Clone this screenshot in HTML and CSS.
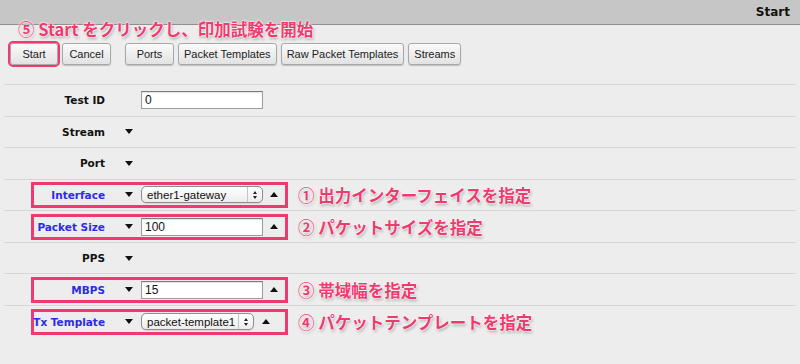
FILE: index.html
```html
<!DOCTYPE html>
<html lang="ja">
<head>
    <meta charset="UTF-8">
    <title>Start</title>
    <link rel="stylesheet" href="styles.css">
</head>
<body>
    <div class="titlebar">
        <span class="title">Start</span>
    </div>

    <div class="toolbar">
        <p class="note note-top">⑤ Start をクリックし、印加試験を開始</p>
        <div class="buttons">
            <button class="btn btn-marked">Start</button>
            <button class="btn">Cancel</button>
            <button class="btn btn-gap">Ports</button>
            <button class="btn">Packet Templates</button>
            <button class="btn">Raw Packet Templates</button>
            <button class="btn">Streams</button>
        </div>
    </div>

    <div class="form">
        <div class="row">
            <div class="field">
                <span class="label">Test ID</span>
                <span class="down blank"></span>
                <input class="text" type="text" value="0">
            </div>
        </div>
        <div class="row">
            <div class="field">
                <span class="label">Stream</span>
                <span class="down"></span>
            </div>
        </div>
        <div class="row">
            <div class="field">
                <span class="label">Port</span>
                <span class="down"></span>
            </div>
        </div>
        <div class="row">
            <div class="field marked">
                <span class="label blue">Interface</span>
                <span class="down"></span>
                <div class="select">
                    <span class="select-value">ether1-gateway</span>
                    <span class="select-arrows"><i class="a-up"></i><i class="a-down"></i></span>
                </div>
                <span class="up"></span>
            </div>
            <p class="note">① 出力インターフェイスを指定</p>
        </div>
        <div class="row">
            <div class="field marked">
                <span class="label blue">Packet Size</span>
                <span class="down"></span>
                <input class="text" type="text" value="100">
                <span class="up"></span>
            </div>
            <p class="note">② パケットサイズを指定</p>
        </div>
        <div class="row">
            <div class="field">
                <span class="label">PPS</span>
                <span class="down"></span>
            </div>
        </div>
        <div class="row">
            <div class="field marked">
                <span class="label blue">MBPS</span>
                <span class="down"></span>
                <input class="text" type="text" value="15">
                <span class="up"></span>
            </div>
            <p class="note">③ 帯域幅を指定</p>
        </div>
        <div class="row">
            <div class="field marked">
                <span class="label blue">Tx Template</span>
                <span class="down"></span>
                <div class="select select-short">
                    <span class="select-value">packet-template1</span>
                    <span class="select-arrows"><i class="a-up"></i><i class="a-down"></i></span>
                </div>
                <span class="up"></span>
            </div>
            <p class="note">④ パケットテンプレートを指定</p>
        </div>
    </div>
</body>
</html>
```

FILE: styles.css
```css
* {
    box-sizing: border-box;
    margin: 0;
    padding: 0;
}

body {
    font-family: "DejaVu Sans", Verdana, sans-serif;
    background-color: #ededed;
    color: #111;
    overflow: hidden;
}

.titlebar {
    height: 25px;
    background-color: #c6c6c6;
    border-bottom: 1px solid #8f8f8f;
    display: flex;
    justify-content: flex-end;
    align-items: center;
    padding-right: 10px;
}

.title {
    font-size: 12px;
    font-weight: bold;
    color: #111;
}

/* annotation callouts */
.note {
    font-family: "Noto Sans CJK JP", "Liberation Sans", sans-serif;
    font-size: 16.5px;
    font-weight: bold;
    line-height: 18px;
    color: #ee3a6e;
    white-space: nowrap;
    text-shadow: 0 0 2px #fff, 0 0 2px #fff, 0 0 1px #fff, 1px 2px 3px rgba(0, 0, 0, 0.3);
    margin-left: 10px;
}

.toolbar {
    padding-left: 10px;
}

.note-top {
    margin: -5px 0 0 8px;
}

.buttons {
    display: flex;
    gap: 4px;
    margin-top: 5px;
}

.btn {
    height: 22px;
    min-width: 49px;
    padding: 0 5px;
    font-family: "Liberation Sans", Arial, sans-serif;
    font-size: 11px;
    color: #222;
    background: linear-gradient(#fafafa, #e2e2e2);
    border: 1px solid #a8a8a8;
    border-radius: 3px;
    box-shadow: 0 1px 1px rgba(0, 0, 0, 0.2);
}

.btn-marked {
    min-width: 48px;
    outline: 2px solid #ee3a6e;
}

.btn-gap {
    margin-left: 10px;
}

/* form rows */
.form {
    margin: 19px 4px 0;
    border-top: 1px solid #d6d6d6;
}

.row {
    height: 31.57px;
    display: flex;
    align-items: center;
    border-bottom: 1px solid #d6d6d6;
}

.row:last-child {
    border-bottom: none;
}

.field {
    width: 257px;
    height: 26px;
    margin-left: 27px;
    border: 3px solid transparent;
    display: flex;
    align-items: center;
}

.field.marked {
    border-color: #ee3a6e;
}

.label {
    width: 71px;
    flex-shrink: 0;
    display: flex;
    justify-content: flex-end;
    white-space: nowrap;
    font-size: 10.5px;
    font-weight: bold;
    color: #111;
}

.label.blue {
    color: #2b2bea;
}

.down,
.up {
    width: 0;
    height: 0;
    flex-shrink: 0;
    border-left: 4px solid transparent;
    border-right: 4px solid transparent;
}

.down {
    margin-left: 20px;
    border-top: 5px solid #111;
}

.down.blank {
    border-top-color: transparent;
}

.up {
    margin-left: 7px;
    border-bottom: 5px solid #111;
}

.text {
    width: 122px;
    height: 18px;
    margin-left: 8px;
    padding: 0 3px;
    font-family: "Liberation Sans", Arial, sans-serif;
    font-size: 12px;
    color: #111;
    background-color: #fff;
    border: 1px solid #9c9c9c;
    border-top-color: #7d7d7d;
    box-shadow: inset 0 1px 1px rgba(0, 0, 0, 0.12);
    outline: none;
}

.select {
    width: 122px;
    height: 17px;
    margin-left: 8px;
    flex-shrink: 0;
    display: flex;
    align-items: center;
    background: linear-gradient(#ffffff, #ececec);
    border: 1px solid #8e8e8e;
    border-radius: 5px;
    box-shadow: 0 1px 1px rgba(0, 0, 0, 0.1);
    font-family: "Liberation Sans", Arial, sans-serif;
    font-size: 11.5px;
    color: #111;
}

.select-short {
    width: 113px;
}

.select-short + .up {
    margin-left: 8px;
}

.select-value {
    flex: 1;
    padding-left: 5px;
    white-space: nowrap;
    overflow: hidden;
}

.select-arrows {
    width: 15px;
    height: 100%;
    border-left: 1px solid #c4c4c4;
    display: flex;
    flex-direction: column;
    align-items: center;
    justify-content: center;
    gap: 2px;
}

.select-arrows i {
    width: 0;
    height: 0;
    border-left: 2.5px solid transparent;
    border-right: 2.5px solid transparent;
}

.a-up {
    border-bottom: 3px solid #222;
}

.a-down {
    border-top: 3px solid #222;
}
```
